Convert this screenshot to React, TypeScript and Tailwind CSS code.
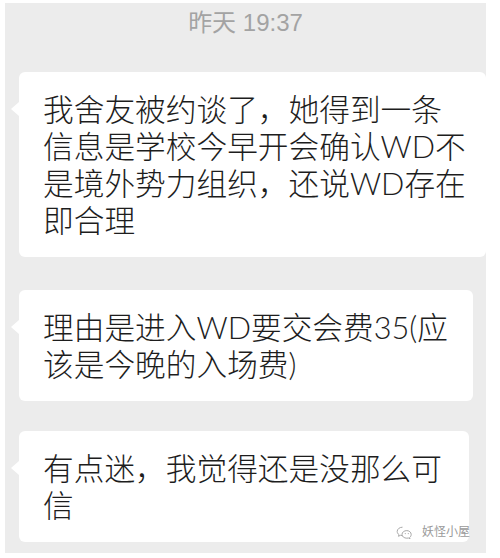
import React from "react";

const font = { fontFamily: '"Liberation Sans", "Noto Sans CJK SC", sans-serif' };
const bodyFont = { fontFamily: 'Lato, "Noto Sans CJK SC", sans-serif' };

type Msg = { lines: string[]; width: string };

const messages: Msg[] = [
  {
    lines: [
      "我舍友被约谈了，她得到一条",
      "信息是学校今早开会确认WD不",
      "是境外势力组织，还说WD存在",
      "即合理",
    ],
    width: "w-[467px]",
  },
  { lines: ["理由是进入WD要交会费35(应", "该是今晚的入场费)"], width: "w-[454px]" },
  { lines: ["有点迷，我觉得还是没那么可", "信"], width: "w-[450px]" },
];

function Bubble({ msg }: { msg: Msg }) {
  return (
    <div className={`relative ${msg.width} bg-white rounded-[6px] pl-6 pr-4 pt-[19px] pb-[18px]`}>
      {/* little tail on the left */}
      <div className="absolute left-[-8px] top-[30px] w-0 h-0 border-y-[7px] border-y-transparent border-r-[8px] border-r-white" />
      <p className="text-[30.7px] leading-[37px] font-light text-[#1d1d1d] whitespace-nowrap" style={bodyFont}>
        {msg.lines.map((l, i) => (
          <span key={i} className="block">
            {l}
          </span>
        ))}
      </p>
    </div>
  );
}

function WechatMark() {
  return (
    <svg width="17" height="13" viewBox="0 0 17 13" fill="none" stroke="#a8a8a8" strokeWidth="1">
      <path d="M6.5 1.2C3.5 1.2 1.2 3.1 1.2 5.5c0 1.3.7 2.4 1.8 3.2l-.5 1.6 1.9-1c.6.2 1.3.3 2 .3" />
      <path d="M10.8 4.6c-2.7 0-4.8 1.7-4.8 3.8s2.1 3.8 4.8 3.8c.6 0 1.1-.1 1.6-.2l1.6.9-.4-1.4c1-.7 1.6-1.8 1.6-3.1 0-2.1-2.1-3.8-4.4-3.8z" />
      <circle cx="9.3" cy="7.6" r=".6" fill="#a8a8a8" stroke="none" />
      <circle cx="12.3" cy="7.6" r=".6" fill="#a8a8a8" stroke="none" />
    </svg>
  );
}

export default function App() {
  return (
    <div className="relative w-[500px] h-[558px] bg-white pt-[3px] pl-[5px]" style={font}>
      <div className="w-[481px] h-[550px] bg-[#ececec] pl-[14px] pt-[6px]">
        <div className="text-center text-[24px] leading-[28px] text-[#a3a3a3] pr-[14px]">昨天 19:37</div>
        <div className="flex flex-col mt-[35px]">
          <Bubble msg={messages[0]} />
          <div className="mt-[33px]">
            <Bubble msg={messages[1]} />
          </div>
          <div className="mt-[30px]">
            <Bubble msg={messages[2]} />
          </div>
        </div>
      </div>

      {/* watermark */}
      <div className="absolute left-[396px] top-[525px] flex items-center gap-[9px]">
        <WechatMark />
        <span className="text-[12px] leading-[14px] text-[#9a9a9a]">妖怪小屋</span>
      </div>
    </div>
  );
}
